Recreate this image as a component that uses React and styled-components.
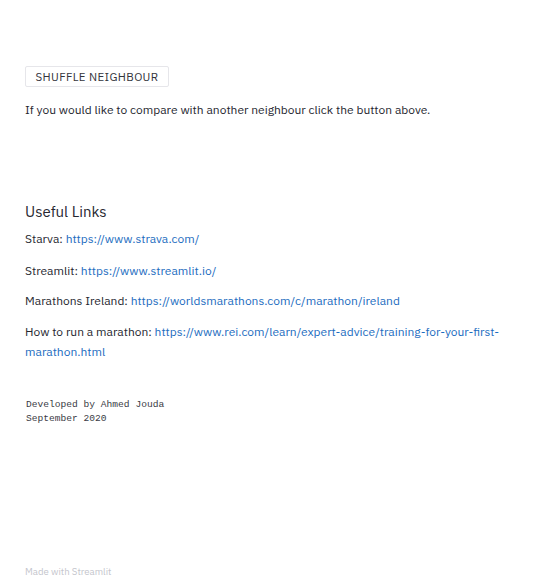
import React from "react";
import styled, { createGlobalStyle } from "styled-components";

const Global = createGlobalStyle`
  html, body { margin: 0; padding: 0; background: #ffffff; }
  body { font-family: "IBM Plex Sans", "Noto Sans", "Open Sans", sans-serif; color: #262730; }
`;

const Page = styled.div`
  width: 544px;
  height: 583px;
  display: flex;
  flex-direction: column;
  box-sizing: border-box;
  padding: 66px 25px 0 25px;
`;

const Main = styled.main`
  flex: 1;
  display: flex;
  flex-direction: column;
`;

const Button = styled.button`
  align-self: flex-start;
  height: 21px;
  width: 144px;
  padding: 0;
  background: #ffffff;
  border: 1px solid #e6e6ea;
  border-radius: 2px;
  font-family: inherit;
  font-size: 11.5px;
  font-weight: 400;
  letter-spacing: 0.35px;
  color: #33343c;
`;

const Text = styled.p`
  margin: ${(p) => p.$mt || 0}px 0 0 0;
  font-size: 12px;
  line-height: 20px;
  color: #262730;
`;

const Heading = styled.h3`
  margin: 82px 0 0 0;
  font-size: 15px;
  font-weight: 400;
  line-height: 20px;
  color: #262730;
`;

const Link = styled.a`
  color: #1c6cc0;
  text-decoration: none;
`;

const Mono = styled.pre`
  margin: 36px 0 0 1px;
  font-family: "Liberation Mono", "DejaVu Sans Mono", monospace;
  font-size: 9.6px;
  line-height: 14px;
  color: #3a3b44;
`;

const Footer = styled.footer`
  height: 18px;
  font-size: 9.6px;
  color: #c4c5cc;
`;

export default function App() {
  return (
    <>
      <Global />
      <Page>
        <Main>
          <Button>SHUFFLE NEIGHBOUR</Button>
          <Text $mt={13}>If you would like to compare with another neighbour click the button above.</Text>
          <Heading>Useful Links</Heading>
          <Text $mt={7}>Starva: <Link href="#">https://www.strava.com/</Link></Text>
          <Text $mt={12}>Streamlit: <Link href="#">https://www.streamlit.io/</Link></Text>
          <Text $mt={10}>Marathons Ireland: <Link href="#">https://worldsmarathons.com/c/marathon/ireland</Link></Text>
          <Text $mt={11}>How to run a marathon: <Link href="#">https://www.rei.com/learn/expert-advice/training-for-your-first-marathon.html</Link></Text>
          <Mono>{"Developed by Ahmed Jouda\nSeptember 2020"}</Mono>
        </Main>
        <Footer>Made with Streamlit</Footer>
      </Page>
    </>
  );
}
